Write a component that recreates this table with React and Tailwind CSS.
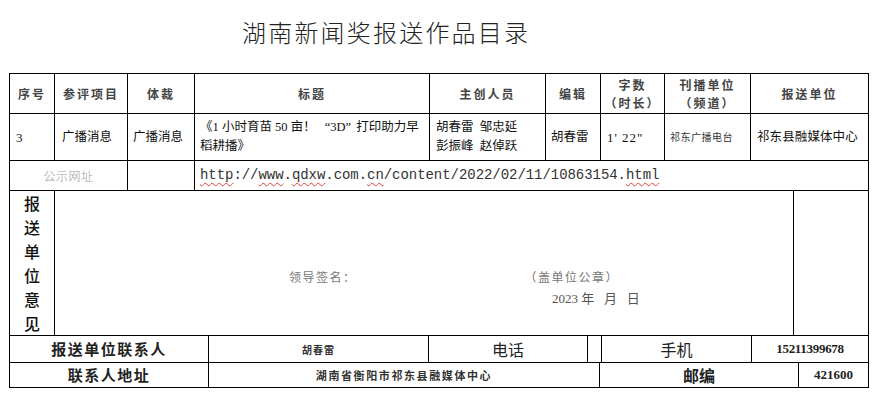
const sans = "font-['Noto_Sans_CJK_SC',sans-serif]"
const mixed = "font-['Liberation_Serif','Noto_Sans_CJK_SC',serif]"

const headers = [
  { w: 'w-[45px]', lines: ['序号'] },
  { w: 'w-[73px]', lines: ['参评项目'] },
  { w: 'w-[67px]', lines: ['体裁'] },
  { w: 'w-[235px]', lines: ['标题'] },
  { w: 'w-[116px]', lines: ['主创人员'] },
  { w: 'w-[55px]', lines: ['编辑'] },
  { w: 'w-[64px]', lines: ['字数', '（时长）'] },
  { w: 'w-[86px]', lines: ['刊播单位', '（频道）'] },
  { w: 'w-[118px]', lines: ['报送单位'] },
]

const Squiggle = ({ children }) => (
  <span className="underline decoration-wavy decoration-[#e0403a] decoration-1 underline-offset-[3px]">
    {children}
  </span>
)

export default function App() {
  return (
    <div className={`min-h-screen w-[878px] bg-white text-[#111] ${sans}`}>
      <div className="h-[73px] pt-[16px] pl-[242px]">
        <h1 className="text-[24px] font-light leading-[32px] tracking-[2.2px] text-[#222]">
          湖南新闻奖报送作品目录
        </h1>
      </div>

      <div className="ml-[9px] w-[860px] border-l border-t border-black">
        {/* header */}
        <div className="flex h-[40px] border-b border-black">
          {headers.map((h) => (
            <div
              key={h.lines[0]}
              className={`${h.w} flex shrink-0 flex-col items-center justify-center border-r border-black text-[12px] font-semibold leading-[18px] tracking-[2px] text-[#444]`}
            >
              {h.lines.map((line) => (
                <span key={line}>{line}</span>
              ))}
            </div>
          ))}
        </div>

        {/* entry */}
        <div className={`flex h-[47px] border-b border-black text-[12.5px] leading-[19px] ${mixed}`}>
          <div className="flex w-[45px] shrink-0 items-center border-r border-black pl-[6px] text-[13px]">3</div>
          <div className="flex w-[73px] shrink-0 items-center border-r border-black pl-[7px]">广播消息</div>
          <div className="flex w-[67px] shrink-0 items-center border-r border-black pl-[5px]">广播消息</div>
          <div className="flex w-[235px] shrink-0 flex-col justify-center border-r border-black pl-[5px]">
            <span>
              《1 小时育苗 50 亩！ <span className="ml-[6px]">“</span>3D<span className="mr-[5px]">”</span>打印助力早
            </span>
            <span>稻耕播》</span>
          </div>
          <div className="flex w-[116px] shrink-0 flex-col justify-center border-r border-black pl-[6px]">
            <span>胡春雷&nbsp;&nbsp;邹忠延</span>
            <span>彭振峰&nbsp;&nbsp;赵倬跃</span>
          </div>
          <div className="flex w-[55px] shrink-0 items-center border-r border-black pl-[5px]">胡春雷</div>
          <div className="flex w-[64px] shrink-0 items-center border-r border-black pl-[6px] text-[13px] tracking-[1px]">
            1'&nbsp;22"
          </div>
          <div className="flex w-[86px] shrink-0 items-center border-r border-black pl-[5px] text-[10px] tracking-[0.5px] text-[#333]">
            祁东广播电台
          </div>
          <div className="flex w-[118px] shrink-0 items-center border-r border-black pl-[6px] tracking-[0.1px]">
            祁东县融媒体中心
          </div>
        </div>

        {/* url */}
        <div className="flex h-[30px] border-b border-black">
          <div className="flex w-[118px] shrink-0 items-center justify-center border-r border-black text-[12px] font-light tracking-[0.5px] text-[#999]">
            公示网址
          </div>
          <div className="w-[67px] shrink-0 border-r border-black" />
          <div className="flex w-[674px] shrink-0 items-center border-r border-black pl-[5px] font-['Liberation_Mono',monospace] text-[14px] tracking-[-0.05px] text-[#333]">
            <Squiggle>http</Squiggle>://<Squiggle>www</Squiggle>.<Squiggle>qdxw</Squiggle>.com.<Squiggle>cn</Squiggle>/content/2022/02/11/10863154.<Squiggle>html</Squiggle>
          </div>
        </div>

        {/* opinion */}
        <div className="flex h-[145px] border-b border-black">
          <div className="flex w-[45px] shrink-0 flex-col items-center justify-center border-r border-black text-[16px] font-medium leading-[24px] text-[#111]">
            {['报', '送', '单', '位', '意', '见'].map((c) => (
              <span key={c}>{c}</span>
            ))}
          </div>
          <div className="flex w-[739px] shrink-0 flex-col border-r border-black pt-[78px] text-[12px] leading-[16px] text-[#777]">
            <div className="flex">
              <span className="ml-[234px] tracking-[1.5px]">领导签名：</span>
              <span className="ml-[168px] tracking-[1.5px]">（盖单位公章）</span>
            </div>
            <div className={`mt-[6px] ml-[497px] ${mixed} text-[13px] text-[#555]`}>
              2023 年&nbsp;&nbsp;&nbsp;月&nbsp;&nbsp;&nbsp;日
            </div>
          </div>
          <div className="w-[75px] shrink-0 border-r border-black" />
        </div>

        {/* contact */}
        <div className="flex h-[27px] border-b border-black">
          <div className="flex w-[199px] shrink-0 items-center justify-center border-r border-black text-[15px] font-semibold tracking-[1.5px] text-[#222]">
            报送单位联系人
          </div>
          <div className="flex w-[220px] shrink-0 items-center justify-center border-r border-black text-[10px] font-semibold tracking-[1px] text-[#333]">
            胡春雷
          </div>
          <div className="flex w-[159px] shrink-0 items-center justify-center border-r border-black text-[16px] text-[#222]">
            电话
          </div>
          <div className="w-[14px] shrink-0 border-r border-black" />
          <div className="flex w-[150px] shrink-0 items-center justify-center border-r border-black text-[16px] text-[#222]">
            手机
          </div>
          <div className="flex w-[117px] shrink-0 items-center justify-center border-r border-black font-['Liberation_Serif',serif] text-[13px] font-bold tracking-[-0.3px] text-[#222]">
            15211399678
          </div>
        </div>

        {/* address */}
        <div className="flex h-[25px] border-b border-black">
          <div className="flex w-[199px] shrink-0 items-center justify-center border-r border-black text-[15px] font-semibold tracking-[1.5px] text-[#222]">
            联系人地址
          </div>
          <div className="flex w-[391px] shrink-0 items-center justify-center border-r border-black text-[11px] font-semibold tracking-[1.6px] text-[#333]">
            湖南省衡阳市祁东县融媒体中心
          </div>
          <div className="flex w-[199px] shrink-0 items-center justify-center border-r border-black text-[16px] font-semibold text-[#222]">
            邮编
          </div>
          <div className="flex w-[70px] shrink-0 items-center justify-center border-r border-black font-['Liberation_Serif',serif] text-[13px] font-bold text-[#222]">
            421600
          </div>
        </div>
      </div>
    </div>
  )
}
